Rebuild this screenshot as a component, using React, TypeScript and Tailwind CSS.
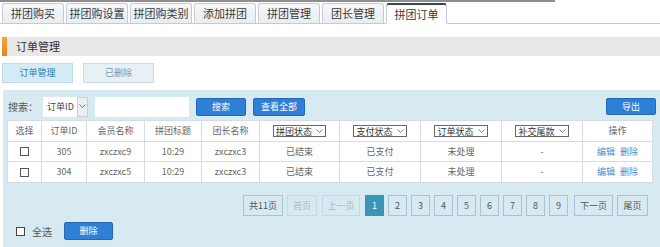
import React from "react";

const tabs = ["拼团购买", "拼团购设置", "拼团购类别", "添加拼团", "拼团管理", "团长管理", "拼团订单"];

const rows = [
  { id: "305", member: "zxczxc9", title: "10:29", leader: "zxczxc3" },
  { id: "304", member: "zxczxc5", title: "10:29", leader: "zxczxc3" },
];

const cols = [
  "w-[34px]",
  "w-[45px]",
  "w-[58px]",
  "w-[57px]",
  "w-[58px]",
  "w-[80px]",
  "w-[81px]",
  "w-[81px]",
  "w-[81px]",
  "flex-1",
];

const Check = () => <span className="inline-block w-[9px] h-[9px] border border-[#555] bg-white" />;

const HeadSelect = ({ label }: { label: string }) => (
  <span className="inline-flex items-center gap-[2px] h-[12px] px-[2px] border border-[#666] bg-white text-[#333] leading-none whitespace-nowrap">
    {label}
    <svg width="7" height="4" viewBox="0 0 7 4" className="ml-[2px]">
      <path d="M0.5 0.5 L3.5 3.5 L6.5 0.5" fill="none" stroke="#777" strokeWidth="0.9" />
    </svg>
  </span>
);

const Cell = ({ w, children, last }: { w: string; children: React.ReactNode; last?: boolean }) => (
  <div className={`${w} flex items-center justify-center whitespace-nowrap ${last ? "" : "border-r border-[#d3dde3]"}`}>
    {children}
  </div>
);

const BlueBtn = ({ w, h, children, className }: { w: string; h: string; children: React.ReactNode; className?: string }) => (
  <button
    className={`${w} ${h} ${className ?? ""} flex items-center justify-center bg-[#2e80d6] border border-[#2169b8] rounded-[2px] text-white text-[9px]`}
  >
    {children}
  </button>
);

const App = () => {
  return (
    <div
      className="w-[660px] h-[247px] overflow-hidden bg-white text-[9px] text-[#555] flex flex-col"
      style={{ fontFamily: '"Noto Sans CJK SC", "Noto Sans", sans-serif' }}
    >
      {/* top strip */}
      <div className="h-[2px] w-[555px] bg-[#8f8f8f]" />

      {/* tabs */}
      <div className="flex items-end gap-[2px] pl-[2px] pt-[1px] border-b border-[#c5ccd2] h-[22px]">
        {tabs.map((t, i) =>
          i === tabs.length - 1 ? (
            <div
              key={t}
              className="w-[61px] h-[21px] -mb-px flex items-center justify-center bg-white border border-[#c5ccd2] border-b-white border-t-2 border-t-[#34495e] rounded-t-[3px] text-[11px] text-[#3a3a3a]"
            >
              {t}
            </div>
          ) : (
            <div
              key={t}
              className="w-[62px] h-[20px] flex items-center justify-center bg-gradient-to-b from-[#f6f8f9] to-[#e9edf0] border border-[#c5ccd2] border-b-0 rounded-t-[3px] text-[11px] text-[#3a3a3a]"
            >
              {t}
            </div>
          )
        )}
      </div>

      {/* section header */}
      <div className="mt-[13px] ml-[2px] h-[19px] bg-[#e8e8e8] flex items-center">
        <div className="w-[5px] h-full bg-gradient-to-b from-[#f7a541] to-[#e8801a]" />
        <span className="ml-[9px] text-[11px] text-[#333]">订单管理</span>
      </div>

      {/* sub tabs */}
      <div className="mt-[7px] ml-[2px] flex gap-[10px]">
        <div className="w-[71px] h-[20px] flex items-center justify-center bg-[#d3ecf6] border border-[#bcdcea] text-[#2d7fb8]">
          订单管理
        </div>
        <div className="w-[71px] h-[20px] flex items-center justify-center bg-[#e7f0f4] border border-[#c9dde6] text-[#739bb5]">
          已删除
        </div>
      </div>

      {/* main panel */}
      <div className="mt-[7px] ml-[3px] flex-1 bg-[#d7e9f1] flex flex-col px-[4px] pt-[6px]">
        {/* search row */}
        <div className="flex items-center h-[21px]">
          <span className="ml-[1px] text-[#555] w-[35px] text-[10px] whitespace-nowrap">搜索：</span>
          <div className="flex h-[20px] bg-white">
            <span className="w-[34px] flex items-center pl-[4px] text-[#444] whitespace-nowrap">订单ID</span>
            <span className="w-[11px] flex items-center justify-center bg-[#eeeeee] border border-[#cfcfcf]">
              <svg width="7" height="5" viewBox="0 0 7 5">
                <path d="M0.5 0.5 L3.5 3.5 L6.5 0.5" fill="none" stroke="#777" strokeWidth="1" />
              </svg>
            </span>
          </div>
          <div className="ml-[7px] w-[94px] h-[20px] bg-white" />
          <BlueBtn w="w-[50px]" h="h-[18px]" className="ml-[7px]">
            搜索
          </BlueBtn>
          <BlueBtn w="w-[52px]" h="h-[18px]" className="ml-[7px]">
            查看全部
          </BlueBtn>
          <BlueBtn w="w-[50px]" h="h-[17px]" className="ml-auto">
            导出
          </BlueBtn>
        </div>

        {/* table */}
        <div className="mt-[3px] w-[646px] bg-white border border-[#d3dde3] flex flex-col">
          <div className="flex h-[21px] border-b border-[#d3dde3] text-[#666]">
            <Cell w={cols[0]}>选择</Cell>
            <Cell w={cols[1]}>订单ID</Cell>
            <Cell w={cols[2]}>会员名称</Cell>
            <Cell w={cols[3]}>拼团标题</Cell>
            <Cell w={cols[4]}>团长名称</Cell>
            <Cell w={cols[5]}>
              <HeadSelect label="拼团状态" />
            </Cell>
            <Cell w={cols[6]}>
              <HeadSelect label="支付状态" />
            </Cell>
            <Cell w={cols[7]}>
              <HeadSelect label="订单状态" />
            </Cell>
            <Cell w={cols[8]}>
              <HeadSelect label="补交尾款" />
            </Cell>
            <Cell w={cols[9]} last>
              操作
            </Cell>
          </div>
          {rows.map((r, i) => (
            <div key={r.id} className={`flex h-[20px] text-[#666] ${i === 0 ? "border-b border-[#d3dde3]" : ""}`}>
              <Cell w={cols[0]}>
                <Check />
              </Cell>
              <Cell w={cols[1]}>{r.id}</Cell>
              <Cell w={cols[2]}>{r.member}</Cell>
              <Cell w={cols[3]}>{r.title}</Cell>
              <Cell w={cols[4]}>{r.leader}</Cell>
              <Cell w={cols[5]}>已结束</Cell>
              <Cell w={cols[6]}>已支付</Cell>
              <Cell w={cols[7]}>未处理</Cell>
              <Cell w={cols[8]}>-</Cell>
              <Cell w={cols[9]} last>
                <span className="text-[#3b8fd3]">编辑</span>
                <span className="ml-[5px] text-[#3b8fd3]">删除</span>
              </Cell>
            </div>
          ))}
        </div>

        {/* pagination */}
        <div className="mt-[12px] flex gap-[4px] pl-[236px] h-[21px]">
          <span className="w-[40px] flex items-center justify-center border border-[#a9c4d0] text-[#555]">共11页</span>
          <span className="w-[30px] flex items-center justify-center border border-[#c4d9e2] text-[#a9b9c1]">首页</span>
          <span className="w-[38px] ml-[1px] flex items-center justify-center border border-[#c4d9e2] text-[#a9b9c1]">上一页</span>
          <span className="w-[19px] ml-[1px] flex items-center justify-center bg-[#3a96b7] text-white">1</span>
          {["2", "3", "4", "5", "6", "7", "8", "9"].map((n) => (
            <span key={n} className="w-[19px] flex items-center justify-center border border-[#a9c4d0] text-[#555]">
              {n}
            </span>
          ))}
          <span className="w-[39px] ml-[2px] flex items-center justify-center border border-[#a9c4d0] text-[#555]">下一页</span>
          <span className="w-[31px] flex items-center justify-center border border-[#a9c4d0] text-[#555]">尾页</span>
        </div>

        {/* footer actions */}
        <div className="mt-[6px] flex items-center h-[18px] pl-[9px]">
          <span className="inline-block w-[9px] h-[9px] border border-[#444] bg-white" />
          <span className="ml-[7px] text-[#555] text-[10px]">全选</span>
          <BlueBtn w="w-[49px]" h="h-[18px]" className="ml-[12px]">
            删除
          </BlueBtn>
        </div>
      </div>
    </div>
  );
};

export default App;
